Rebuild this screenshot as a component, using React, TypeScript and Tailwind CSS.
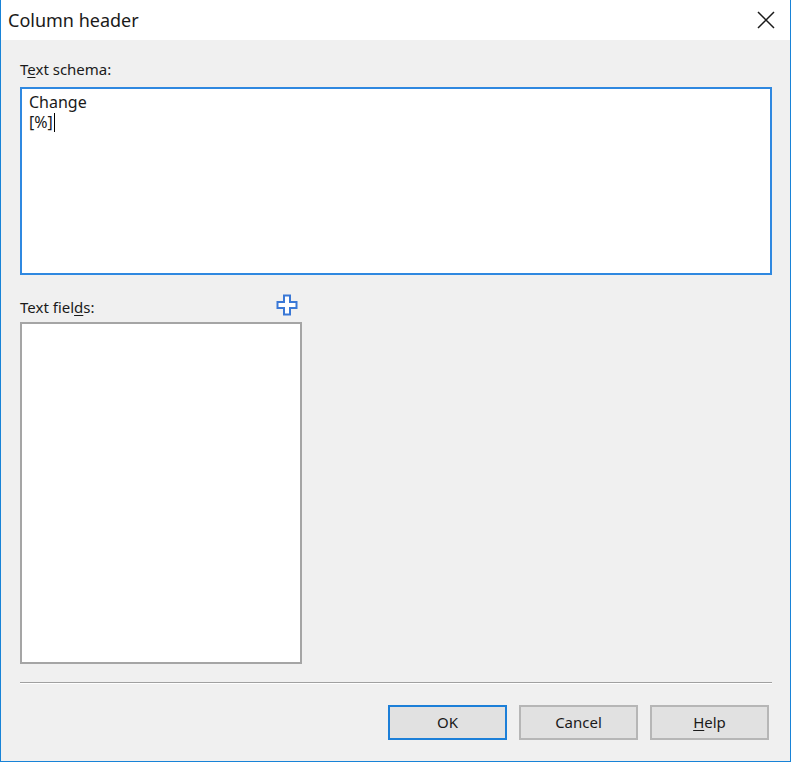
import React from "react";

const font = { fontFamily: '"Noto Sans", "Open Sans", sans-serif' };

function PlusIcon() {
  return (
    <svg width="22" height="22" viewBox="0 0 22 22" aria-hidden="true">
      <polygon
        points="8,1.5 14,1.5 14,8 20.5,8 20.5,14 14,14 14,20.5 8,20.5 8,14 1.5,14 1.5,8 8,8"
        fill="#ffffff"
        stroke="#3a78d6"
        strokeWidth="2"
        strokeLinejoin="miter"
      />
    </svg>
  );
}

function CloseIcon() {
  return (
    <svg width="18" height="18" viewBox="0 0 18 18" aria-hidden="true">
      <path d="M1 1 L17 17 M17 1 L1 17" stroke="#1a1a1a" strokeWidth="1.5" />
    </svg>
  );
}

function DlgButton({ children, primary }: { children: React.ReactNode; primary?: boolean }) {
  return (
    <button
      className={
        primary
          ? "h-[35px] w-[119px] border-2 border-[#1c7fd8] bg-[#e1e1e1] text-[15px] text-[#1a1a1a]"
          : "h-[35px] w-[119px] border-2 border-[#b6b6b6] bg-[#e1e1e1] text-[15px] text-[#1a1a1a]"
      }
    >
      {children}
    </button>
  );
}

export default function App() {
  return (
    <div
      className="flex h-[762px] w-[791px] flex-col border-x border-b border-[#1883d7] bg-[#f0f0f0] text-[#1a1a1a]"
      style={font}
    >
      <div className="flex h-[40px] shrink-0 items-center justify-between bg-white pl-[7px] pr-[15px]">
        <span className="text-[18px]">Column header</span>
        <CloseIcon />
      </div>

      <div className="flex flex-1 flex-col px-[19px] pt-[18px]">
        <div className="h-[29px] text-[15px] leading-[22px]">
          T<span className="underline underline-offset-2">e</span>xt schema:
        </div>
        <div className="h-[188px] w-[752px] border-2 border-[#2f88e0] bg-white px-[7px] pt-[3px] text-[16px] leading-[20px]">
          <div>Change</div>
          <div className="flex items-center">
            [%]<span className="ml-[1px] inline-block h-[19px] w-[1px] bg-black" />
          </div>
        </div>

        <div className="mt-[19px] flex h-[28px] w-[282px] items-start justify-between">
          <span className="pt-[2px] text-[15px] leading-[22px]">
            Text fiel<span className="underline underline-offset-2">d</span>s:
          </span>
          <span className="mr-[4px]">
            <PlusIcon />
          </span>
        </div>
        <div className="h-[342px] w-[282px] border-2 border-[#a5a5a5] bg-white" />

        <div className="mt-[18px] h-[2px] w-[752px] border-t border-[#a0a0a0] border-b border-b-white" />

        <div className="mt-[21px] flex w-[749px] justify-end gap-[12px]">
          <DlgButton primary>OK</DlgButton>
          <DlgButton>Cancel</DlgButton>
          <DlgButton>
            <span className="underline underline-offset-2">H</span>elp
          </DlgButton>
        </div>
      </div>
    </div>
  );
}
